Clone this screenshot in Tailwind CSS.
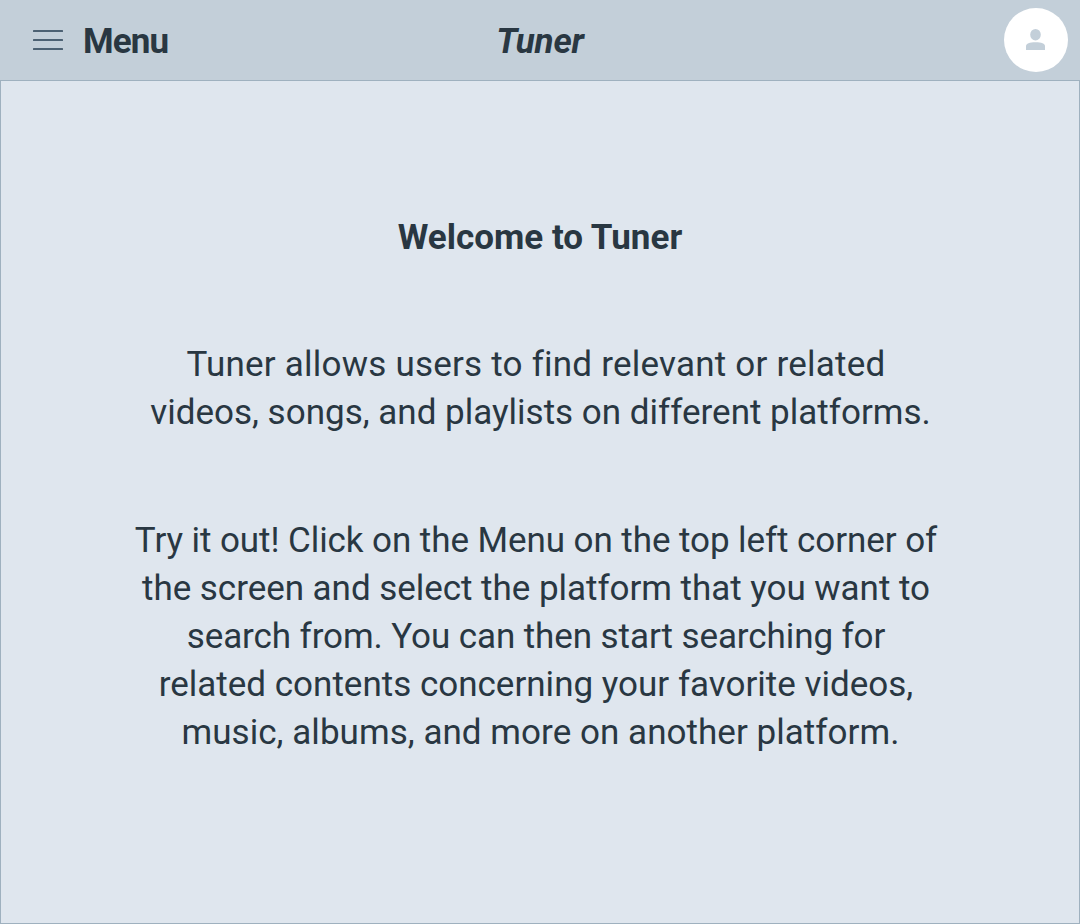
<!DOCTYPE html>
<html lang="en">
<head>
<meta charset="utf-8">
<title>Tuner</title>
<script src="https://cdn.jsdelivr.net/npm/@tailwindcss/browser@4"></script>
</head>
<body class="font-['Roboto',sans-serif] text-[#293742]">
<div class="flex h-[924px] w-[1080px] flex-col">
  <header class="grid h-20 grid-cols-[1fr_auto_1fr] items-center bg-[#c3cfd9] pl-8 pr-8">
    <button class="flex items-center gap-[19px]">
      <svg class="h-8 w-8" viewBox="0 0 32 32" fill="#4c6173"><rect x="1" y="6" width="30" height="2" rx=".5"/><rect x="1" y="15" width="30" height="2" rx=".5"/><rect x="1" y="24" width="30" height="2" rx=".5"/></svg>
      <span class="pt-0.5 text-[35px] font-bold leading-none tracking-[-0.9px]">Menu</span>
    </button>
    <h1 class="pt-0.5 text-center text-[35px] font-bold italic leading-none tracking-[-0.25px]">Tuner</h1>
    <div class="-mr-5 ml-auto flex h-16 w-16 items-center justify-center rounded-full bg-white">
      <svg class="h-8 w-8" viewBox="0 0 32 32" fill="#c3cfd9"><ellipse cx="15.5" cy="10.7" rx="5.3" ry="5.8"/><path d="M6 26V22C6 19.500 9.500 18.200 15.500 18.200S25 19.500 25 22V26Z"/></svg>
    </div>
  </header>
  <main class="flex flex-1 flex-col items-center border border-[#9fb1bf] bg-[#dfe6ee] pt-[133px] text-center text-[35px] leading-[48px] [font-variant-ligatures:none]">
    <h2 class="font-bold">Welcome to Tuner</h2>
    <div class="mt-[79px]">
      <p class="pr-[8px] tracking-[0.22px]">Tuner allows users to find relevant or related</p>
      <p class="pl-px">videos, songs, and playlists on different platforms.</p>
    </div>
    <div class="mt-20">
      <p class="pr-[8px] tracking-[-0.075px]">Try it out! Click on the Menu on the top left corner of</p>
      <p class="pr-[8px] tracking-[-0.04px]">the screen and select the platform that you want to</p>
      <p class="pr-[8px] tracking-[-0.09px]">search from. You can then start searching for</p>
      <p class="pr-[8px]">related contents concerning your favorite videos,</p>
      <p class="pl-px tracking-[0.04px]">music, albums, and more on another platform.</p>
    </div>
  </main>
</div>
</body>
</html>
